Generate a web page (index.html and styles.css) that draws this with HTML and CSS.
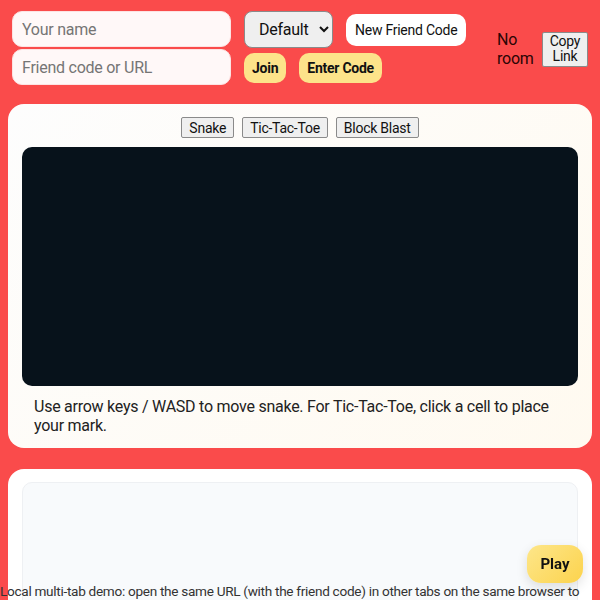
FILE: index.html
```html
<!DOCTYPE html>
<html lang="en">
<head>
    <meta charset="UTF-8">
    <meta name="viewport" content="width=device-width, initial-scale=1.0">
    <title>Friend Arcade</title>
    <link rel="stylesheet" href="styles.css">
</head>
<body>
    <header class="topbar">
        <div class="inputs">
            <input type="text" class="field" placeholder="Your name">
            <input type="text" class="field" placeholder="Friend code or URL">
        </div>
        <div class="controls">
            <div class="row">
                <select class="theme-select">
                    <option>Default</option>
                </select>
                <button class="white-btn">New Friend Code</button>
            </div>
            <div class="row">
                <button class="yellow-btn">Join</button>
                <button class="yellow-btn">Enter Code</button>
            </div>
        </div>
        <div class="room">
            <span class="room-status">No room</span>
            <button class="copy-btn">Copy Link</button>
        </div>
    </header>

    <section class="card game-card">
        <div class="tabs">
            <button class="tab">Snake</button>
            <button class="tab">Tic-Tac-Toe</button>
            <button class="tab">Block Blast</button>
        </div>
        <div class="screen"></div>
        <p class="hint">Use arrow keys / WASD to move snake. For Tic-Tac-Toe, click a cell to place your mark.</p>
    </section>

    <section class="card chat-card">
        <div class="chat-box"></div>
    </section>

    <p class="footnote">Local multi-tab demo: open the same URL (with the friend code) in other tabs on the same browser to play together.</p>

    <button class="play-btn">Play</button>
</body>
</html>
```

FILE: styles.css
```css
body {
    margin: 0;
    padding: 11px 8px 8px;
    background-color: #fa4b4b;
    font-family: Roboto, "Liberation Sans", Arial, sans-serif;
    letter-spacing: -0.25px;
    color: #111;
    min-height: 800px;
    position: relative;
}
button, input, select {
    letter-spacing: inherit;
}
.topbar {
    display: flex;
    align-items: flex-start;
    padding: 0 4px;
    margin-bottom: 19px;
}
.inputs {
    display: flex;
    flex-direction: column;
    gap: 2px;
    width: 219px;
}
.field {
    height: 36px;
    box-sizing: border-box;
    border: 1px solid #fde3e3;
    border-radius: 10px;
    background: #fff8f8;
    padding: 0 9px;
    font-family: inherit;
    font-size: 16px;
    color: #222;
}
.field::placeholder {
    color: #757575;
}
.controls {
    margin-left: 13px;
    display: flex;
    flex-direction: column;
    gap: 5px;
}
.row {
    display: flex;
    align-items: center;
    gap: 13px;
}
.theme-select {
    width: 89px;
    height: 37px;
    border: 1px solid #8a8a8a;
    border-radius: 8px;
    background: #efefef;
    font-family: inherit;
    font-size: 16px;
    color: #111;
    padding: 0 6px 0 10px;
}
.white-btn {
    height: 32px;
    padding: 0 9px;
    border: none;
    border-radius: 10px;
    background: #fff;
    font-family: inherit;
    font-size: 14px;
    color: #111;
}
.yellow-btn {
    height: 30px;
    padding: 0 8px;
    border: none;
    border-radius: 10px;
    background: #fde38a;
    font-family: inherit;
    font-size: 14px;
    font-weight: bold;
    color: #111;
}
.room {
    margin-left: auto;
    margin-top: 19px;
    display: flex;
    align-items: center;
    gap: 8px;
}
.room-status {
    width: 37px;
    font-size: 16px;
    line-height: 19px;
    color: #2a0505;
}
.copy-btn {
    width: 46px;
    height: 35px;
    padding: 0;
    font-family: inherit;
    font-size: 14px;
    line-height: 15px;
    color: #111;
    background: #efefef;
    border: 1px solid #8a8a8a;
    border-radius: 2px;
}
.card {
    border-radius: 16px;
    padding: 13px 14px;
    margin-bottom: 21px;
}
.game-card {
    background: linear-gradient(135deg, #fdfdfd, #fffaf0);
    padding-bottom: 13px;
}
.tabs {
    display: flex;
    justify-content: center;
    gap: 8px;
    margin-bottom: 9px;
}
.tab {
    height: 21px;
    padding: 0 7px;
    font-family: inherit;
    font-size: 14px;
    color: #111;
    background: #efefef;
    border: 1px solid #8a8a8a;
    border-radius: 2px;
}
.screen {
    height: 239px;
    background: #07121b;
    border-radius: 10px;
}
.hint {
    margin: 11px 8px 0 12px;
    font-size: 16px;
    line-height: 19px;
    color: #222;
}
.chat-card {
    background: #fff;
}
.chat-box {
    height: 300px;
    background: #f8fafc;
    border: 1px solid #eef0f3;
    border-radius: 10px;
}
.footnote {
    position: absolute;
    top: 583px;
    left: 0;
    right: 0;
    margin: 0;
    font-size: 13.6px;
    letter-spacing: -0.3px;
    line-height: 17px;
    color: #333;
}
.play-btn {
    position: fixed;
    right: 17px;
    bottom: 17px;
    width: 56px;
    height: 38px;
    border: none;
    border-radius: 14px;
    background: linear-gradient(135deg, #fde68a, #fcd34d);
    box-shadow: 0 4px 12px rgba(0, 0, 0, 0.12);
    font-family: inherit;
    font-size: 15px;
    font-weight: bold;
    letter-spacing: 0;
    color: #111;
}
```
